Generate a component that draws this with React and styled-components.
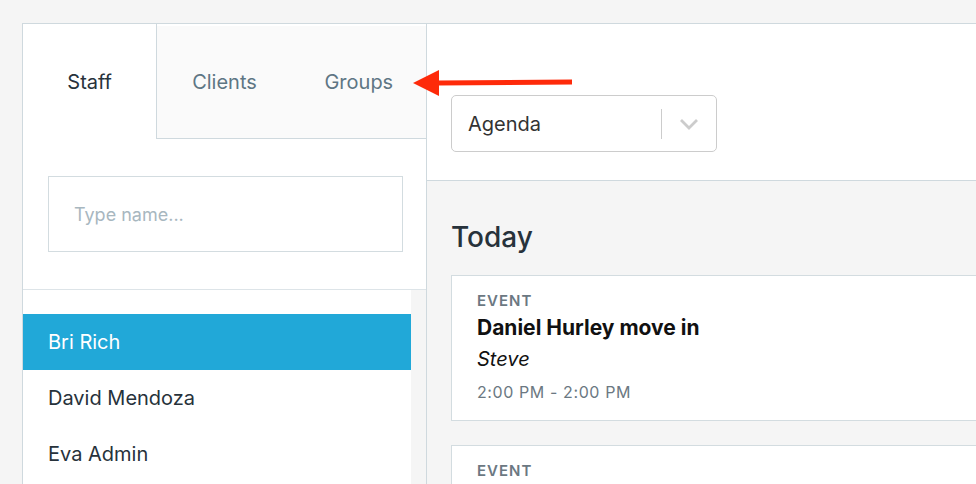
import React from "react"
import styled, { createGlobalStyle } from "styled-components"

const GlobalStyle = createGlobalStyle`
    html, body {
        margin: 0;
        padding: 0;
        background: #f5f5f5;
        font-family: Inter, "Noto Sans", "Liberation Sans", sans-serif;
        overflow: hidden;
    }
    * { box-sizing: border-box; }
`

const Page = styled.div`
    position: relative;
    display: flex;
    width: 976px;
    height: 484px;
    padding: 23px 0 0 22px;
    overflow: hidden;
`
const Sidebar = styled.div`
    width: 405px;
    flex-shrink: 0;
    display: flex;
    flex-direction: column;
    border: 1px solid #cfd9de;
    border-bottom: none;
    background: #fff;
`
const Tabs = styled.div`
    display: grid;
    grid-template-columns: 1fr 1fr 1fr;
    height: 115px;
    flex-shrink: 0;
    padding-top: 2px;
`
const Tab = styled.div`
    display: flex;
    align-items: center;
    justify-content: center;
    font-size: 20px;
    color: ${p => (p.$active ? "#27323b" : "#5e7684")};
    background: ${p => (p.$active ? "#fff" : "#fafafa")};
    border-right: ${p => (p.$active ? "1px solid #cfd9de" : "none")};
    border-bottom: ${p => (p.$active ? "none" : "1px solid #cfd9de")};
    margin-top: ${p => (p.$active ? "-2px" : "0")};
`
const SearchBox = styled.div`
    flex-shrink: 0;
    padding: 37px 23px 37px 25px;
    border-bottom: 1px solid #dde4e8;
`
const SearchInput = styled.input`
    width: 100%;
    height: 76px;
    border: 1px solid #d3dce0;
    padding: 0 25px;
    font-family: inherit;
    font-size: 18px;
    color: #27323b;
    outline: none;
    &::placeholder { color: #a8b7bf; }
`
const ListWrap = styled.div`
    flex: 1;
    display: flex;
`
const List = styled.div`
    flex: 1;
    padding-top: 24px;
    background: #fff;
`
const Gutter = styled.div`
    width: 15px;
    background: #f5f5f5;
`
const Row = styled.div`
    height: 56px;
    display: flex;
    align-items: center;
    padding-left: 25px;
    font-size: 20px;
    color: ${p => (p.$selected ? "#fff" : "#27323b")};
    background: ${p => (p.$selected ? "#21a8d8" : "transparent")};
`
const Main = styled.div`
    width: 700px;
    flex-shrink: 0;
    border-top: 1px solid #cfd9de;
    display: flex;
    flex-direction: column;
`
const Header = styled.div`
    flex-shrink: 0;
    height: 157px;
    padding: 71px 0 0 24px;
    background: #fff;
    border-bottom: 1px solid #cfd9de;
`
const Select = styled.div`
    width: 266px;
    height: 57px;
    display: flex;
    align-items: center;
    border: 1px solid #cccccc;
    border-radius: 5px;
    padding-left: 16px;
    background: #fff;
`
const SelectValue = styled.div`
    flex: 1;
    font-size: 20px;
    color: #333;
`
const Divider = styled.div`
    width: 1px;
    height: 30px;
    background: #cccccc;
`
const Chevron = styled.div`
    width: 54px;
    display: flex;
    justify-content: center;
    align-items: center;
    color: #cccccc;
`
const Content = styled.div`
    flex: 1;
    padding: 39px 0 0 24px;
`
const Heading = styled.h2`
    margin: 0 0 21px;
    font-size: 28px;
    font-weight: 500;
    line-height: 34px;
    color: #27323b;
`
const Card = styled.div`
    background: #fff;
    border: 1px solid #d3dce0;
    padding: 14px 25px 13px;
    margin-bottom: 24px;
    height: ${p => p.$height || "auto"};
`
const Kind = styled.div`
    font-size: 15px;
    font-weight: 600;
    letter-spacing: 1px;
    line-height: 22px;
    color: #6b7882;
`
const Title = styled.div`
    margin-top: 1px;
    font-size: 21px;
    font-weight: 700;
    line-height: 30px;
    color: #111;
`
const Who = styled.div`
    font-size: 20px;
    font-style: italic;
    line-height: 33px;
    color: #111;
`
const Time = styled.div`
    margin-top: 1px;
    font-size: 16px;
    line-height: 30px;
    color: #6b7882;
    letter-spacing: 0.6px;
`
const Arrow = styled.svg`
    position: absolute;
    left: 410px;
    top: 66px;
`

const App = () => {
    return (
        <>
            <GlobalStyle />
            <Page>
                <Sidebar>
                    <Tabs>
                        <Tab $active>Staff</Tab>
                        <Tab>Clients</Tab>
                        <Tab>Groups</Tab>
                    </Tabs>
                    <SearchBox>
                        <SearchInput placeholder="Type name..." />
                    </SearchBox>
                    <ListWrap>
                        <List>
                            <Row $selected>Bri Rich</Row>
                            <Row>David Mendoza</Row>
                            <Row>Eva Admin</Row>
                        </List>
                        <Gutter />
                    </ListWrap>
                </Sidebar>
                <Main>
                    <Header>
                        <Select>
                            <SelectValue>Agenda</SelectValue>
                            <Divider />
                            <Chevron>
                                <svg width="20" height="12" viewBox="0 0 20 12">
                                    <path d="M2 2l8 8 8-8" fill="none" stroke="currentColor" strokeWidth="2.8" />
                                </svg>
                            </Chevron>
                        </Select>
                    </Header>
                    <Content>
                        <Heading>Today</Heading>
                        <Card>
                            <Kind>EVENT</Kind>
                            <Title>Daniel Hurley move in</Title>
                            <Who>Steve</Who>
                            <Time>2:00 PM - 2:00 PM</Time>
                        </Card>
                        <Card $height="120px">
                            <Kind>EVENT</Kind>
                        </Card>
                    </Content>
                </Main>
                <Arrow width="166" height="34" viewBox="0 0 166 34">
                    <path d="M28 14.5 L162 13.5 L162 18.5 L28 19.5 Z" fill="#fe2a0a" />
                    <path d="M3 17 L29 4 L29 30 Z" fill="#fe2a0a" />
                </Arrow>
            </Page>
        </>
    )
}

export default App
